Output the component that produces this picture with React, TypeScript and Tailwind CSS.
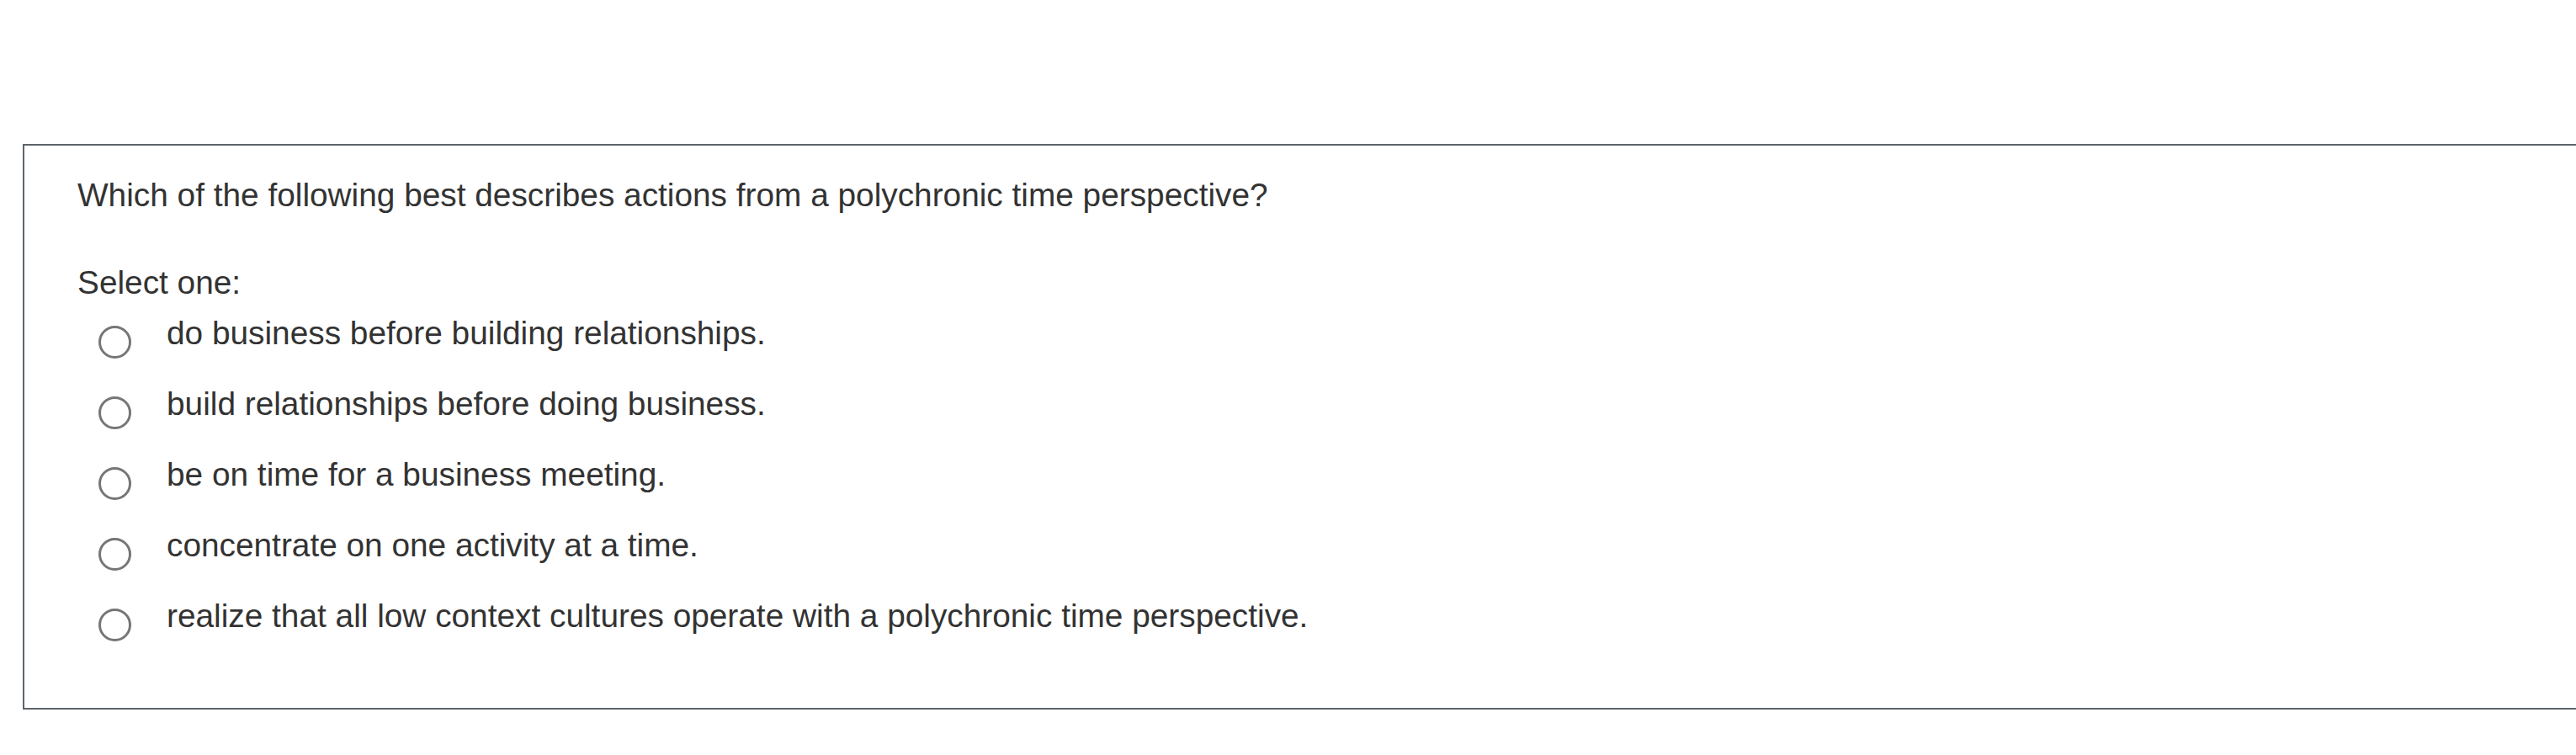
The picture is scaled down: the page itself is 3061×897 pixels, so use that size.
import React from 'react';

const options: string[] = [
  'do business before building relationships.',
  'build relationships before doing business.',
  'be on time for a business meeting.',
  'concentrate on one activity at a time.',
  'realize that all low context cultures operate with a polychronic time perspective.',
];

const Radio: React.FC = () => (
  <span className="absolute left-[25px] top-[15px] block w-[39px] h-[39px] rounded-full border-[3px] border-[#767676] bg-white" />
);

const App: React.FC = () => {
  return (
    <div
      className="w-[3061px] h-[897px] bg-white overflow-hidden text-[#333333]"
      style={{ fontFamily: '"Liberation Sans", Arial, sans-serif' }}
    >
      <div className="ml-[27px] mt-[171px] w-[3100px] border-2 border-[#5d646b] pl-[63px] pt-[35px] pb-[49px]">
        <p className="text-[38.8px] leading-[48px]">
          Which of the following best describes actions from a polychronic time perspective?
        </p>
        <p className="mt-[56px] text-[38.8px] leading-[48px]">Select one:</p>
        <div className="mt-[12px]">
          {options.map((opt) => (
            <label key={opt} className="relative block h-[84px]">
              <Radio />
              <span className="block pl-[106px] text-[38.8px] leading-[48px]">{opt}</span>
            </label>
          ))}
        </div>
      </div>
    </div>
  );
};

export default App;
